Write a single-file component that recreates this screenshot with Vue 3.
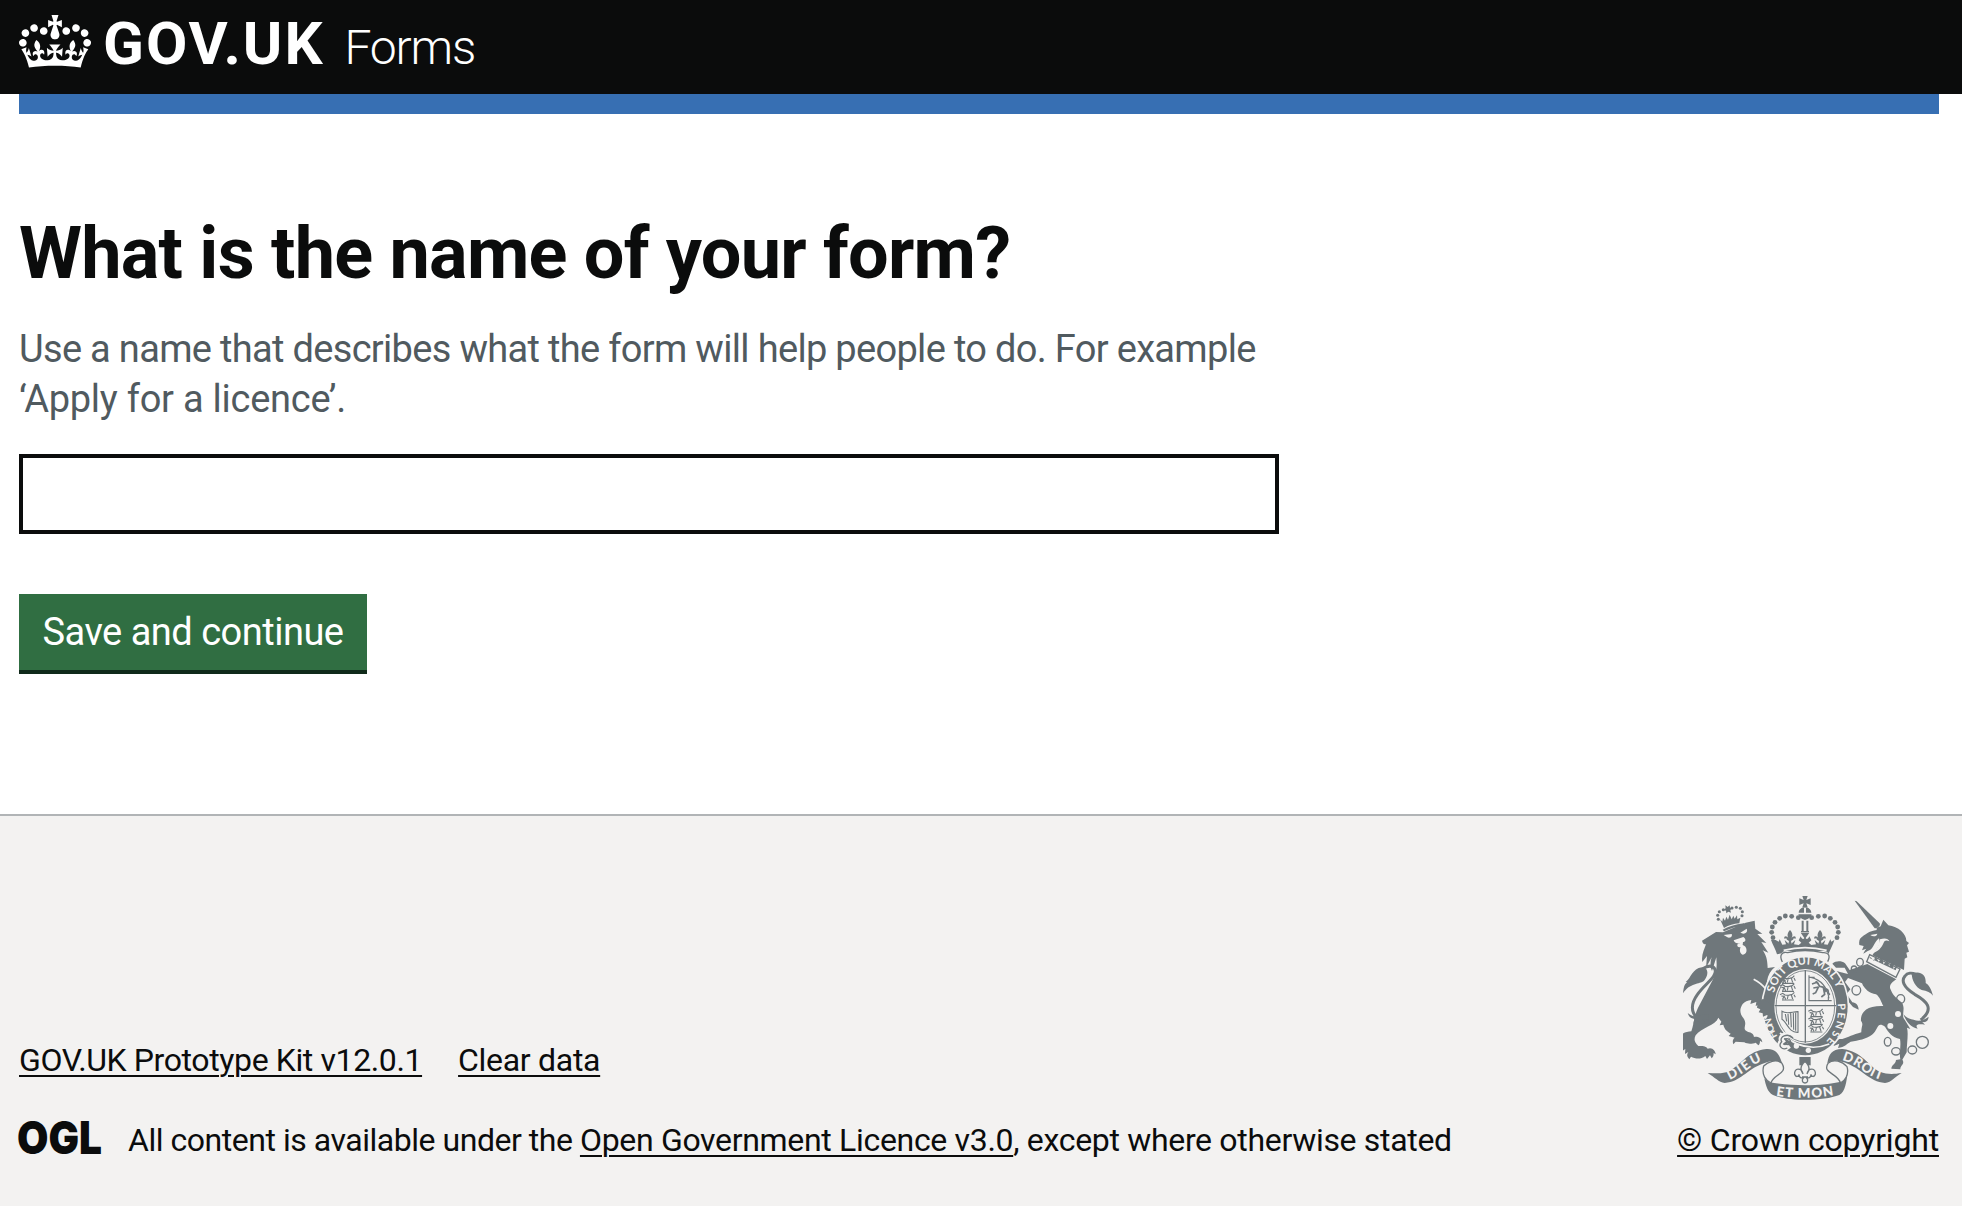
<script setup>
// Pearls along the left half of the large crown; the right half is mirrored.
const pearls = [[415, 113], [395, 109], [376, 108], [359, 115], [345, 127], [337, 141], [335, 157], [339, 173]]
const lionPearls = [[175, 118], [173, 106], [178, 95], [190, 89], [216, 84], [229, 82], [241, 85], [247, 95], [246, 107]]
const rings = [[600, 247, 10, 12], [582, 267, 8, 9], [589, 331, 13, 14], [722, 357, 12, 13], [683, 485, 10, 13], [708, 514, 13, 11], [757, 510, 13, 12], [787, 487, 18, 18]]
// Three walking lions, repeated in two quarters of the shield.
const lions = [[360, 290], [360, 314], [360, 340], [445, 390], [445, 413], [445, 436]]
</script>

<template>
  <div class="page">
    <header class="header">
      <a class="logo" href="#">
        <svg class="crown" viewBox="0 0 132 97" aria-hidden="true">
          <path fill="currentColor" fill-rule="evenodd" d="M25 30.2c3.5 1.5 7.7-.2 9.1-3.7 1.5-3.6-.2-7.8-3.9-9.2-3.6-1.4-7.6.3-9.1 3.9-1.4 3.5.3 7.5 3.9 9zM9 39.5c3.6 1.5 7.8-.2 9.2-3.7 1.5-3.6-.2-7.8-3.9-9.1-3.6-1.5-7.6.2-9.1 3.8-1.4 3.5.3 7.5 3.8 9zM4.4 57.2c3.5 1.5 7.7-.2 9.1-3.8 1.5-3.6-.2-7.7-3.9-9.1-3.5-1.5-7.6.3-9.1 3.8-1.4 3.5.3 7.6 3.9 9.1zm38.3-21.4c3.5 1.5 7.7-.2 9.1-3.8 1.5-3.6-.2-7.7-3.9-9.1-3.6-1.5-7.6.3-9.1 3.8-1.3 3.6.4 7.7 3.9 9.1zm64.4-5.6c-3.6 1.5-7.8-.2-9.1-3.7-1.5-3.6.2-7.8 3.8-9.2 3.6-1.4 7.7.3 9.2 3.9 1.3 3.5-.4 7.5-3.9 9zm15.9 9.3c-3.6 1.5-7.7-.2-9.1-3.7-1.5-3.6.2-7.8 3.7-9.1 3.6-1.5 7.7.2 9.2 3.8 1.5 3.5-.3 7.5-3.8 9zm4.7 17.7c-3.6 1.5-7.8-.2-9.2-3.8-1.5-3.6.2-7.7 3.9-9.1 3.6-1.5 7.7.3 9.2 3.8 1.3 3.5-.4 7.6-3.9 9.1zM89.3 35.8c-3.6 1.5-7.8-.2-9.2-3.8-1.4-3.6.2-7.7 3.9-9.1 3.6-1.5 7.7.3 9.2 3.8 1.4 3.6-.3 7.7-3.9 9.1zM69.7 17.7l8.9 4.7V9.3l-8.9 2.8c-.2-.3-.5-.6-.9-.9L72.4 0H59.6l3.5 11.2c-.3.3-.6.5-.9.9l-8.8-2.8v13.1l8.8-4.7c.3.3.6.7.9.9l-5 15.4v.1c-.2.8-.4 1.6-.4 2.4 0 4.1 3.1 7.5 7 8.1h.2c.3 0 .7.1 1 .1.4 0 .7 0 1-.1h.2c4-.6 7.1-4.1 7.1-8.1 0-.8-.1-1.7-.4-2.4V34l-5.1-15.4c.4-.2.7-.6 1-.9zM66 92.8c16.9 0 32.8 1.1 47.1 3.2 4-16.9 8.9-26.7 14-33.5l-9.6-3.4c1 4.9 1.1 7.2 0 10.2-1.5-1.4-3-4.3-4.2-8.7L108.6 76c2.8-2 5-3.2 7.5-3.3-4.4 9.4-10 11.9-13.6 11.2-4.3-.8-6.3-4.6-5.6-7.9 1-4.7 5.7-5.9 8-.5 4.3-8.7-3-11.4-7.6-8.8 7.1-7.2 7.9-13.5 2.1-21.1-8 6.1-8.1 12.3-4.5 20.8-4.7-5.4-12.1-2.5-9.5 6.2 3.4-5.2 7.9-2 7.2 3.1-.6 4.3-6.4 7.8-13.5 7.2-10.3-.9-10.9-8-11.2-13.8 2.5-.5 7.1 1.8 11 7.3L80.2 60c-4.1 4.4-8 5.3-12.3 5.4 1.4-4.4 8-11.6 8-11.6H55.5s6.4 7.2 7.9 11.6c-4.2-.1-8-1-12.3-5.4l1.4 16.4c3.9-5.5 8.5-7.7 10.9-7.3-.3 5.8-.9 12.8-11.1 13.8-7.2.6-12.9-2.9-13.5-7.2-.7-5 3.8-8.3 7.1-3.1 2.7-8.7-4.6-11.6-9.4-6.2 3.7-8.5 3.6-14.7-4.6-20.8-5.8 7.6-5 13.9 2.2 21.1-4.7-2.6-11.9.1-7.7 8.8 2.3-5.5 7.1-4.2 8.1.5.7 3.3-1.3 7.1-5.7 7.9-3.5.7-9-1.8-13.5-11.2 2.5.1 4.7 1.3 7.5 3.3l-4.7-15.4c-1.2 4.4-2.7 7.2-4.3 8.7-1.1-3-.9-5.3 0-10.2l-9.5 3.4c5 6.9 9.9 16.7 14 33.5 14.8-2.1 30.8-3.2 47.7-3.2z" />
        </svg>
        <span class="brand">GOV.UK</span>
        <span class="product">Forms</span>
      </a>
    </header>

    <main class="main">
      <div class="bar"></div>
      <form class="form" @submit.prevent>
        <h1 class="title"><label for="form-name">What is the name of your form?</label></h1>
        <div class="hint">
          <div>Use a name that describes what the form will help people to do. For example</div>
          <div class="hint-end">‘Apply for a licence’.</div>
        </div>
        <input id="form-name" class="input" type="text" />
        <button class="button" type="submit">Save and continue</button>
      </form>
    </main>

    <footer class="footer">
      <div class="meta">
        <nav class="links">
          <a class="kit" href="#">GOV.UK Prototype Kit v12.0.1</a>
          <a class="clear" href="#">Clear data</a>
        </nav>
        <div class="licence">
          <svg class="ogl" viewBox="0 0 83 36" aria-hidden="true">
            <text x="-2" y="34.2" textLength="85" lengthAdjust="spacingAndGlyphs">OGL</text>
          </svg>
          <span class="licence-text"><span class="lead">All content is available under the </span><a href="#">Open Government Licence v3.0</a>, except where otherwise stated</span>
        </div>
      </div>

      <div class="copyright">
        <svg class="arms" viewBox="69 48 750 612" aria-hidden="true">
          <defs>
            <path id="garter-left" d="M356 473 A107 125 0 0 1 336 362" />
            <path id="garter-top" d="M342 339 A100 119 0 0 1 537 356" />
            <path id="garter-right" d="M533 371 A107 127 0 0 1 494 489" />
            <path id="ribbon-left" d="M209 600 Q248 582 276 558 Q292 548 310 542" />
            <path id="ribbon-mid" d="M348 647 Q436 661 524 645" />
            <path id="ribbon-right" d="M546 541 Q572 547 596 563 Q628 591 672 602" />
            <g id="walker" class="thin">
              <path d="M0 4l8-4 7 5 10 1 12-3 6-6M4 8l8 1-4 9M12 8l5 10M24 8l-2 9M34 5l4 12M42 4l4 8M6 20h36" />
            </g>
            <path id="lily" d="M0-16C10-5 8 2 4 10C9 0 19 1 17 10L11 9C10 15 6 15 3 17L5 26H-5L-3 17C-6 15-10 15-11 9L-17 10C-19 1-9 0-4 10C-8 2-10-5 0-16Z" />
          </defs>

          <!-- large crown -->
          <g>
            <circle v-for="p in pearls" :key="'l' + p" :cx="p[0]" :cy="p[1]" r="7.2" />
            <circle v-for="p in pearls" :key="'r' + p" :cx="870 - p[0]" :cy="p[1]" r="7.2" />
            <path d="M427 48h16l-4 12 13-5v20l-13-5 4 12h-16l4-12-13 5V55l13 5z" />
            <path d="M416 98c1-10 9-16 19-16s18 6 19 16zM415 103h40c-2 9-8 14-20 17c-12-3-18-8-20-17z" />
            <path class="bg" d="M432 83h6v16h-6z" />
            <path d="M425 122h6v32h-6zM439 122h6v32h-6zM423 153h24v4h-24z" />
            <path d="M347 180l9 5 3-7 8 16 11-1-4-13 12 11h8l12-11-4 13 14 2 8-7-8-7 6-12c4 10 9 9 11 5l-11-16h26l-11 16c2 4 7 5 11-5l6 12-8 7 8 7 14-2-4-13 12 11h8l12-11-4 13 11 1 8-16 3 7 9-5c-3 13-12 27-18 43c-44-11-110-11-154 0c-4-16-14-30-18-43z" />
            <use href="#lily" x="390" y="166" /><use href="#lily" x="480" y="166" />
            <path class="cut" d="M371 211Q435 195 500 211" />
          </g>

          <!-- lion -->
          <g>
            <circle v-for="p in lionPearls" :key="'c' + p" :cx="p[0]" :cy="p[1]" r="4.6" />
            <path d="M196 76l7 5 6-5 1 7 7 2-6 5 2 8-8-3-6 5-1-8-7-3 6-4zM180 118l7 7 2-12 6 9 4-12 5 9 5-15 6 14 5-11 4 9 7-10 1 12 9-5-3 17c-17 1-32 6-46 14zM188 149c17-9 37-16 64-19v7c-23 3-43 8-60 17z" />
            <path d="M168 156l21 1 68-29 27-6 2 24 21 15-15 1 27 27-15-3 21 32-17-7c9 12 14 25 15 53l22-3c-13 10-21 24-24 42c9 12 15 25 17 43c-1 22 8 30 2 42c-4 10-13 12-14 1c-2 9-12 13-11 0c-6 7-14 5-8-8c-8 3-9-5-3-10l-17 7 2-12-18 6 3-12c-11 2-20 5-26 12c-10 15-9 29 2 42c13 18-1 28 6 37c8 8 24 4 26 20c11-2 24 3 25 16l-7-5c0 9-2 11-5 14l-8-8c-10 4-24 5-34-1l-26-2-7 8c-3-9-2-15 4-20l-18-5 6-7c-13-8-19-14-22-27l-11 2 5-11-9-12c-8 23-52 30-68 53c-6 12-4 21 8 32c14 1 20-2 28 8c13-6 24 6 24 17l-6-4c0 9-2 12-6 16l-5-9-9 11-5-9c-15 12-31 8-43 2l-5 8c-8-8-8-15-3-22l-10 6 1-15-10 6 3-17-12 2c0-13 2-20 8-26l-7-2c5-10 20-14 36-16c9-25 7-49 26-82l38-72c15-31 12-49 11-68l-13 41c-6-13-6-25-1-41l-17 31 3-35-14 18c-4-21 6-37 11-53c-6 0-10-2-12-11z" />
            <path class="bg" d="M191 165l24-3c4 9-7 14-14 9zM241 158l19-12c4 9-2 14-10 15zM221 181l29-10c12 9 4 15-1 15l-1 9c14 3 17 27 1 29c-8-1-12-12-7-23c-7 2-13-2-9-9l8-2c-10 1-17-1-20-9z" />
            <path class="cut" d="M281 298Q324 319 344 378" />
            <path class="tail" d="M145 419C99 424 83 385 112 344C132 313 176 288 164 266C157 256 143 257 128 266" />
            <path d="M69 340c3-24 6-29 13-33l-5-1c17-12 19-40 49-44c24 2 17 29 6 40c-14 12-42 5-63 38zM122 405c-19 6-27 4-39-6c4 12 10 16 20 18l-3 14c8-3 13-6 15-11c1 10 9 11 21 10l-8-12 18-1v-13z" />
          </g>

          <!-- unicorn -->
          <g>
            <path d="M584 62l6 2 69 66c4 6-6 16-15 15z" />
            <path d="M650 143l12-4 8-20 15 17c29 3 55 26 54 47l8 6-6 7 6 19-8 3 3 14-8 4-2 34-95-44c14-20 27-32 20-51c-17 13-17 36-34 38l-13 8c2-6 6-11 9-15l-13 5 5-13-13-3c-2-10 1-19 5-22c9-7 25-21 47-23z" />
            <path class="bg" d="M631 165l21-4c-2 9-13 10-21 4zM660 178c14-5 26-2 28 6c-9-4-14-3-17 4c-6 15-16 27-34 31c13-8 19-21 23-41z" />
            <path class="cut" d="M622 222L722 270" />
            <path class="outline light" d="M629 224l91 43-12 25-88-47z" />
            <path d="M632 232l10 11 4-16 10 18 10-12 5 20 12-15 4 20 14-13-1 22 14-14-7 18-80-38z" />
            <path d="M622 252l87 46c-10 7-20 13-19 26c9 23 15 27 36 44c12 21-4 38 8 51l17 28-10-4c5 19-1 49-1 74l-13 22c9 13-7 17-6 29l-27-2c1-13 12-11 14-26l13-2c-4-21 3-40-1-61c-24-5-34-19-45-37c-25-18-20 10-39 24c-18 13-40 17-64 21c-13 7-17 16-38 19l4-13-17 7c1-17 12-22 26-21c18-5 31-13 57-20c-1-17 8-24-1-34c-2-24 14-47 67-45c-7-12-10-27-22-35c-19-3-35-15-42-33l-42-16-9 12 16 22-11 14 17 25c11 2 18 7 19 22l-17-8-18-21-12 0 2-18-12-4 10-10-16-27-23-4 12-7-9-7c11-5 13-12 24-8l27 7-10-19-26 0-11-12c11-9 27-9 38-1l14 20z" />
            <circle class="bg" cx="714" cy="402" r="9" /><circle class="bg" cx="691" cy="438" r="9" />
            <ellipse v-for="r in rings" :key="r[0]" class="outline" :cx="r[0]" :cy="r[1]" :rx="r[2]" :ry="r[3]" />
            <path class="tail" d="M782 420C825 386 800 363 764 343C728 320 724 301 735 288C742 278 756 278 767 283" />
            <path d="M755 281c25-10 44 2 42 28c8 4 17 17 22 38c-7-10-18-14-34-17c-19-9-29-29-30-49zM730 403c9 22 21 38 43 43c-9-12 0-15 22-12l-8-8c12 2 18-4 19-16c-16 12-31 15-45 9c-12-2-22-6-31-16z" />
          </g>

          <!-- garter -->
          <ellipse class="bg" cx="436" cy="379" rx="132" ry="152" />
          <ellipse cx="436" cy="379" rx="127" ry="147" />
          <ellipse class="bg" cx="436" cy="379" rx="93" ry="112" />
          <ellipse class="outline fine" cx="436" cy="379" rx="88" ry="107" />
          <path class="outline" d="M436 270V488M344 377H528" />
          <use v-for="l in lions" :key="l.join()" href="#walker" :x="l[0]" :y="l[1]" />
          <path class="thin" d="M447 286V362H515M453 292Q498 303 507 355M447 292H464M505 362V350" />
          <path class="thick" d="M456 312l15-5 8 12 12 3 8 14M460 324l16-3M476 320l-9 18-9 4M490 323l4 20-10 8M498 326c14 6 0 12 12 18M466 305l10 6" />
          <path class="thin" d="M366 394c14 10 34 0 48 1v62c-28 2-33-31-48-39zM376 402l4 22M384 402l2 32M392 400l2 42M400 399l1 50M407 398v54" />
          <path class="bg" d="M304 388l23 12-9 17-16-5z" />
          <path d="M293 370l16-14 32 22-2 25-12 8-6-6-12 5-1-10-12-3 5-9-10-5z" />
          <path class="cut" d="M360 459Q433 522 508 492" />
          <circle class="bg" cx="409" cy="498" r="8" /><circle class="bg" cx="445" cy="511" r="8" />
          <path class="cut wide" d="M388 470c-16-12-30 3-22 13c-12 8-3 22 12 21l10-7" />
          <path class="outline" d="M399 474c-16-17-43-4-34 11c-12 12 1 27 17 19M374 478c10-6 20 4 18 11c-2 7-12 6-17 1" />
          <text class="motto small"><textPath href="#garter-left" startOffset="5" textLength="60">HON</textPath></text>
          <text class="motto"><textPath href="#garter-top" startOffset="0" textLength="263">SOIT QUI MAL Y</textPath></text>
          <text class="motto small"><textPath href="#garter-right" textLength="122">PENSE</textPath></text>
          <path class="bg" d="M363 235c-3-14 4-24 18-22h110c15 0 18 11 10 34q-64-31-134 1z" />
          <path class="outline" d="M367 246c-10-20-2-32 16-28q52-13 105 0c18-2 24 10 15 27" />

          <!-- ribbon -->
          <path d="M418 531h34v25h-34z" />
          <g class="outline light" transform="translate(435 575)">
            <path d="M0-31C17-14 13-4 6 7C10-13 34-12 31 8C28 17 19 16 18 8C18 20 8 19 5 19C10 24 9 34 0 34S-10 24-5 19C-8 19-18 20-18 8C-19 16-28 17-31 8C-34-12-10-13-6 7C-13-4-17-14 0-31ZM-9 16H9" />
          </g>
          <path d="M143 579c24 0 45 4 64-6c39-20 55-60 112-66c33-2 40 21 48 45c-19-16-43-7-61 0c-48 18-62 52-112 57c-18-2-29-17-51-30z" />
          <path d="M725 579c-28 4-44 4-65-4c-39-19-53-61-112-68c-31-1-42 15-46 43c19-14 43-6 61 1c48 20 63 52 112 58c20-2 30-19 50-30z" />
          <path d="M326 606c61 13 161 14 221-2l17-34c-5 38-8 66-26 75c-48 19-153 19-199 0c-17-8-22-31-26-50z" />
          <path class="outline light" d="M366 550c-17-15-43-4-55 8c-7 27 7 45 22 51c7-28 52-26 33-59M504 550c17-15 43-6 57 10c7 24-6 42-20 49c-5-28-56-29-37-59" />
          <text class="motto big"><textPath href="#ribbon-left" textLength="112">DIEU</textPath></text>
          <text class="motto big"><textPath href="#ribbon-mid" textLength="174">ET MON</textPath></text>
          <text class="motto big"><textPath href="#ribbon-right" textLength="132">DROIT</textPath></text>
        </svg>
        <a class="crown-link" href="#">© Crown copyright</a>
      </div>
    </footer>
  </div>
</template>

<style>
body { background: #fff; }
</style>

<style scoped>
.page {
  min-height: 1206px;
  display: flex;
  flex-direction: column;
  color: #0b0c0c;
  font-family: Roboto, "Liberation Sans", sans-serif;
}
.header { height: 94px; box-sizing: border-box; padding: 14px 19px 0; background: #0b0c0c; }
.logo { display: flex; color: #fff; text-decoration: none; align-items: baseline; }
.crown { width: 72px; height: 53px; align-self: flex-start; margin: 1px 12px 0 0; }
.brand { font-size: 60px; line-height: 60px; font-weight: 700; letter-spacing: 2px; margin-right: 20px; }
.product { font-size: 48px; line-height: 60px; font-weight: 300; letter-spacing: -1.2px; }
.main { margin: 0 23px 0 19px; }
.bar { height: 20px; background: #376fb3; }
.form { width: 1260px; padding-top: 100px; display: flex; flex-direction: column; align-items: flex-start; }
.title { margin: 0; font-size: 72px; line-height: 80px; letter-spacing: -0.75px; white-space: nowrap; }
.hint { margin-top: 30px; color: #505a5f; font-size: 38px; line-height: 50px; letter-spacing: -0.68px; white-space: nowrap; }
.hint-end { letter-spacing: -0.25px; }
.input { box-sizing: border-box; width: 1260px; height: 80px; margin: 30px 0 60px; border: 4px solid #0b0c0c; border-radius: 0; background: #fff; font: inherit; font-size: 38px; }
.button { box-sizing: border-box; width: 348px; height: 80px; padding: 0 0 4px; border: 0; box-shadow: inset 0 -4px #102a1a; background: #306e42; color: #fff; font: 38px/50px Roboto, "Liberation Sans", sans-serif; letter-spacing: -0.5px; }
.footer { margin-top: 140px; flex: 1; box-sizing: border-box; border-top: 2px solid #b1b4b6; background: #f3f2f1; padding: 0 23px 46px 19px; display: flex; justify-content: space-between; align-items: flex-end; font-size: 32px; line-height: 40px; }
.footer a { color: inherit; text-decoration: underline; text-decoration-thickness: 2px; text-underline-offset: 4px; }
.links { display: flex; gap: 36px; }
.kit { letter-spacing: -0.39px; }
.clear { letter-spacing: -0.3px; }
.licence { margin-top: 40px; display: flex; align-items: flex-start; white-space: pre; }
.ogl { width: 83px; height: 36px; margin: 0 26px 0 0; overflow: visible; }
.ogl text { font: 900 45px Inter, "Liberation Sans", sans-serif; fill: #0b0c0c; }
.licence-text { letter-spacing: -0.32px; }
.lead { letter-spacing: -0.47px; }
.copyright { display: flex; flex-direction: column; align-items: flex-end; }
.crown-link { letter-spacing: -0.18px; }
.arms { width: 250px; height: 204px; margin: 0 6px 20px 0; fill: #6f777b; }
.bg { fill: #f3f2f1; }
.cut { fill: none; stroke: #f3f2f1; stroke-width: 5; }
.cut.wide { stroke-width: 16; }
.tail { fill: none; stroke: #6f777b; stroke-width: 9; }
.outline { fill: none; stroke: #6f777b; stroke-width: 4; }
.outline.light { fill: #f3f2f1; }
.outline.fine { stroke-width: 2.5; }
.thin { fill: none; stroke: #6f777b; stroke-width: 3.4; }
.thick { fill: none; stroke: #6f777b; stroke-width: 5; }
.motto { font: 700 34px Lato, "Liberation Sans", sans-serif; fill: #f3f2f1; }
.motto.small { font-size: 31px; }
.motto.big { font-size: 40px; font-weight: 900; }
</style>
